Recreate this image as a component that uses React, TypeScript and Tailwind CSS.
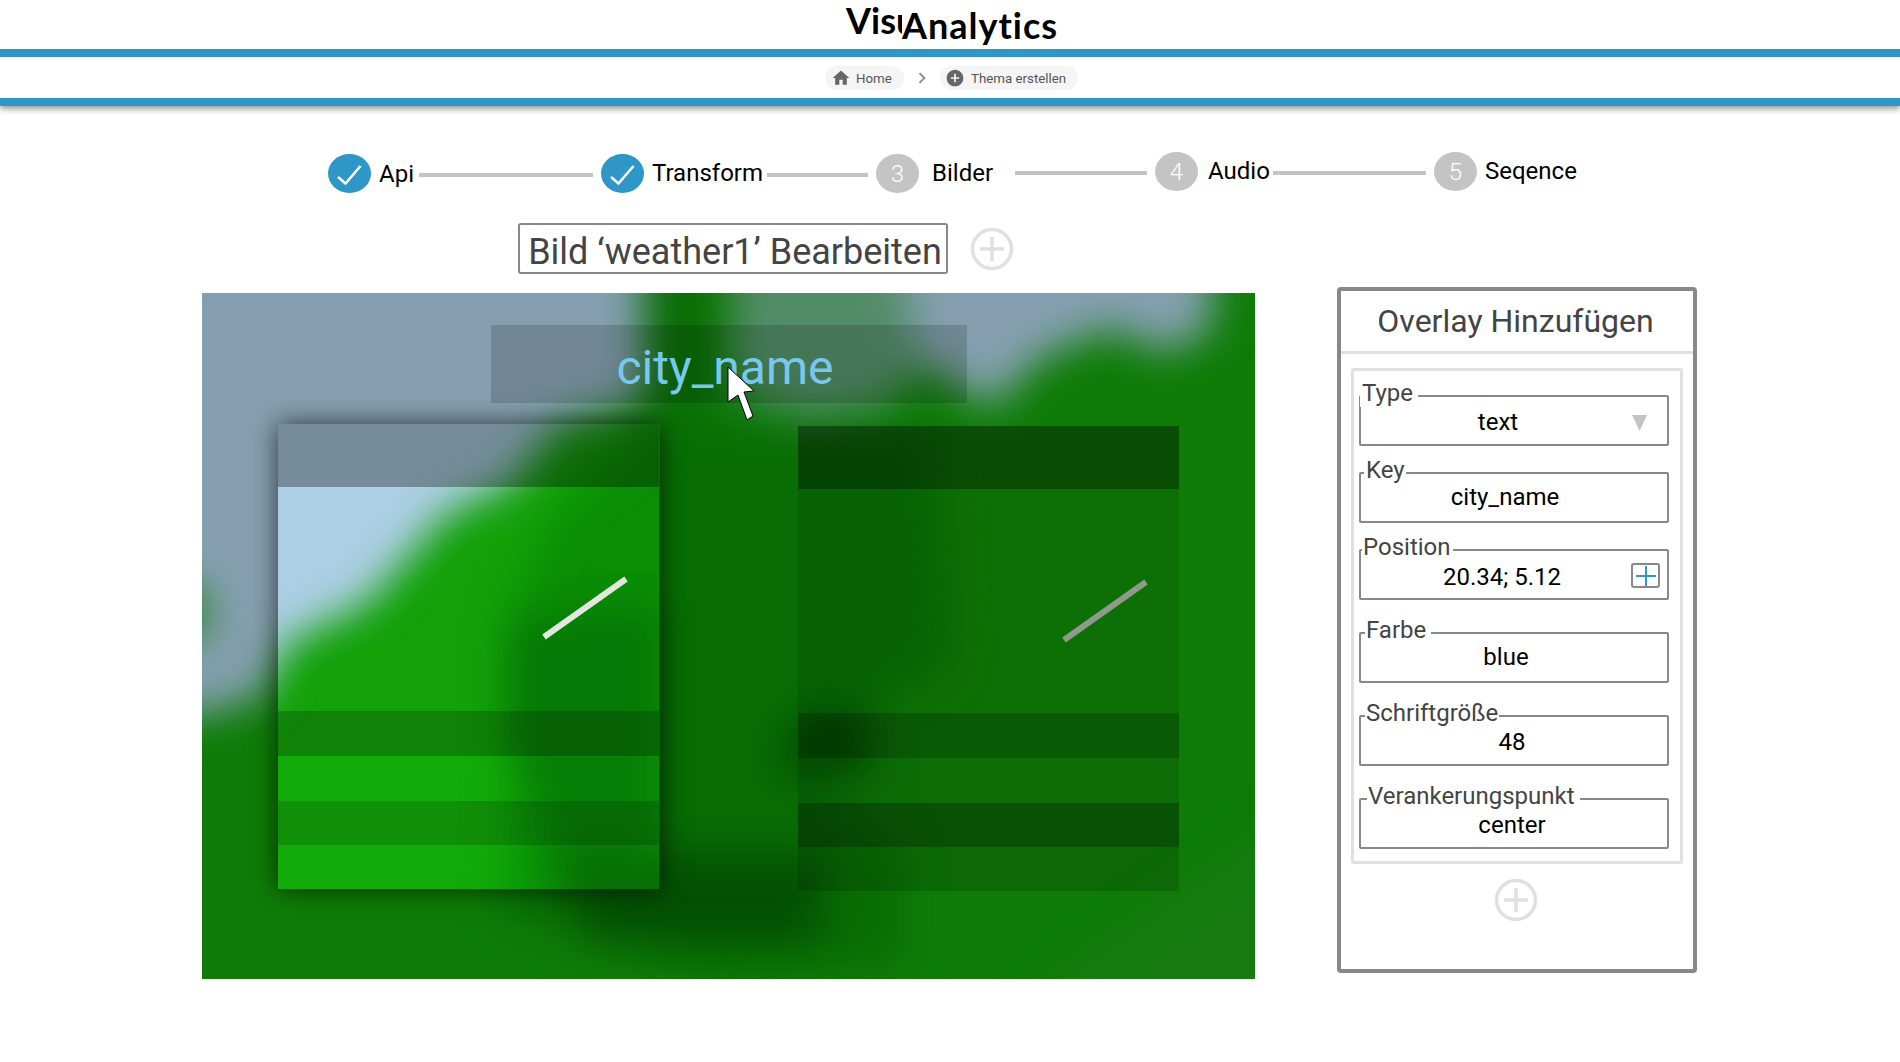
import React from "react";

const PLUS_CIRCLE = "M12 2C6.48 2 2 6.48 2 12s4.48 10 10 10 10-4.48 10-10S17.52 2 12 2zm5 11h-4v4h-2v-4H7v-2h4V7h2v4h4v2z";

function RingPlus({ className }: { className: string }) {
  return (
    <svg viewBox="0 0 44 44" className={className} fill="none" stroke="#e0e0e0">
      <circle cx="22" cy="22" r="19.5" strokeWidth="3.5" />
      <path d="M22 10v24M10 22h24" strokeWidth="3.5" />
    </svg>
  );
}

function Circle({ n, className }: { n?: number; className: string }) {
  return (
    <div className={`flex h-[39px] w-[43px] shrink-0 items-center justify-center rounded-[50%] text-[24px] font-light text-white ${className}`}>
      {n ?? (
        <svg viewBox="0 0 43 39" className="h-[39px] w-[43px]" fill="none" stroke="#fff" strokeWidth="2.6">
          <path d="M10 23l7.5 6.5L32.5 12" />
        </svg>
      )}
    </div>
  );
}

function Line({ className }: { className: string }) {
  return <div className={`h-[4px] shrink-0 bg-[#c4c4c4] ${className}`} />;
}

function Field({
  label,
  value,
  labelClass,
  valueClass,
  className,
  children,
}: {
  label: string;
  value: string;
  labelClass: string;
  valueClass: string;
  className: string;
  children?: React.ReactNode;
}) {
  return (
    <div className={`relative h-[51px] rounded-[2px] border-2 border-[#888] ${className}`}>
      <span className={`absolute top-[-18px] h-[28px] bg-white text-[24px] leading-[28px] text-[#444] ${labelClass}`}>{label}</span>
      <div className={`flex justify-center text-[24px] leading-[28px] text-black ${valueClass}`}>{value}</div>
      {children}
    </div>
  );
}

function Band({ className }: { className: string }) {
  return <div className={`w-full ${className}`} />;
}

function MapArt() {
  return (
    <svg viewBox="0 0 1053 686" className="block h-[686px] w-[1053px]">
      <defs>
        <filter id="blur-map" filterUnits="userSpaceOnUse" x="-200" y="-200" width="1453" height="1086" colorInterpolationFilters="sRGB">
          <feGaussianBlur stdDeviation="20" />
        </filter>
      </defs>
      <rect width="1053" height="686" fill="#0e7c07" />
      <g filter="url(#blur-map)">
        <path d="M860 686 L1100 520 L1100 760 L800 760Z" fill="#167c11" />
        <path
          d="M-80 -80 L445 -80 L445 105 L350 135 L310 190 L245 220 L165 310 L85 350 L60 405 L-80 440Z"
          fill="#859fb0"
        />
        <path d="M-80 285 L5 295 L5 345 L-80 350Z" fill="#0e7c07" opacity="0.8" />
        <path
          d="M695 -80 L1010 -80 L1010 35 L965 60 L908 35 L838 65 L790 115 L745 85 L705 55Z"
          fill="#859fb0"
        />
        <path d="M530 -80 L695 -80 L725 70 L680 115 L600 125 L530 95Z" fill="#6a9188" opacity="0.75" />
        <path d="M440 -40 L505 -40 L515 125 L440 125Z" fill="#086a05" opacity="0.85" />
        <path
          d="M308 320 L355 220 L448 135 L730 135 L745 370 L650 420 L600 465 L700 560 L700 670 L500 680 L300 620 L308 450Z"
          fill="#076d04"
        />
        <path d="M305 330 L458 310 L458 600 L370 590 L305 450Z" fill="#055c04" />
        <path d="M340 560 L620 560 L620 650 L390 650Z" fill="#045003" />
        <path d="M598 420 L670 420 L670 480 L570 480Z" fill="#034c02" />
      </g>
    </svg>
  );
}

function Cursor() {
  return (
    <svg viewBox="-1 -1 28 56" className="absolute left-[727px] top-[366px] h-[56px] w-[28px]">
      <path d="M0 0V35L10 28L19 53L25 49L16 25L26 24Z" fill="#fff" stroke="#000" strokeWidth="1" />
    </svg>
  );
}

export default function App() {
  return (
    <div className="relative h-[1062px] w-[1900px] overflow-hidden bg-white font-['Roboto',sans-serif]">
      <header className="relative shadow-[0_3px_6px_rgba(0,0,0,0.4)]">
        <div className="flex h-[49px] items-start overflow-hidden pl-[846px] font-['Lato',sans-serif] font-bold leading-none text-black">
          <span className="mt-[2px] w-[58px] whitespace-nowrap text-[36px] leading-[36px]">Visu</span>
          <span className="ml-[-2px] mt-[7px] bg-white text-[36px] leading-[36px] tracking-[1px]">Analytics</span>
        </div>
        <div className="h-[8px] bg-[#2f96c8]" />
        <nav className="flex h-[41px] items-center pl-[825px] text-[13.3px] text-[#555]">
          <div className="flex h-[24px] w-[79px] items-center rounded-full bg-[#f5f5f5] pl-[6px]">
            <svg viewBox="0 0 24 24" className="h-[20px] w-[20px]" fill="#666">
              <path d="M10 20v-6h4v6h5v-8h3L12 3 2 12h3v8z" />
            </svg>
            <span className="ml-[5px] pt-[2px]">Home</span>
          </div>
          <svg viewBox="0 0 24 24" className="ml-[7px] h-[22px] w-[22px]" fill="#888">
            <path d="M10 6 8.59 7.41 13.17 12l-4.58 4.59L10 18l6-6z" />
          </svg>
          <div className="ml-[7px] flex h-[24px] w-[138px] items-center rounded-full bg-[#f5f5f5] pl-[5px]">
            <svg viewBox="0 0 24 24" className="h-[20px] w-[20px]" fill="#666">
              <path d={PLUS_CIRCLE} />
            </svg>
            <span className="ml-[6px] pt-[2px]">Thema erstellen</span>
          </div>
        </nav>
        <div className="h-[8px] bg-[#2f96c8]" />
      </header>

      <section className="flex h-[41px] items-start pl-[328px] mt-[46px] text-[24px] leading-[28px] text-black">
        <Circle className="mt-[2px] bg-[#2f96c8]" />
        <span className="ml-[8px] mt-[8px] w-[40px]">Api</span>
        <Line className="mt-[21px] w-[174px]" />
        <Circle className="ml-[8px] mt-[2px] bg-[#2f96c8]" />
        <span className="ml-[8px] mt-[7px] w-[115px]">Transform</span>
        <Line className="mt-[21px] w-[101px]" />
        <Circle n={3} className="ml-[8px] mt-[2px] bg-[#c4c4c4]" />
        <span className="ml-[13px] mt-[7px] w-[83px]">Bilder</span>
        <Line className="mt-[19px] w-[132px]" />
        <Circle n={4} className="ml-[8px] bg-[#c4c4c4]" />
        <span className="ml-[10px] mt-[5px] w-[65px]">Audio</span>
        <Line className="mt-[19px] w-[153px]" />
        <Circle n={5} className="ml-[8px] bg-[#c4c4c4]" />
        <span className="ml-[8px] mt-[5px]">Seqence</span>
      </section>

      <main className="mt-[30px] flex items-start pl-[202px]">
        <div className="w-[1053px] shrink-0">
          <div className="flex h-[51px] items-center pl-[316px]">
            <div className="flex h-[51px] w-[430px] items-center justify-center rounded-[3px] border-2 border-[#888] pl-[4px] pt-[6px] text-[36px] leading-[40px] text-[#444]">
              Bild ‘weather1’ Bearbeiten
            </div>
            <RingPlus className="ml-[22px] h-[44px] w-[44px]" />
          </div>
          <div className="mt-[19px] h-[686px] overflow-hidden">
            <MapArt />
          </div>
        </div>

        <aside className="ml-[82px] mt-[64px] h-[686px] w-[360px] shrink-0 rounded-[4px] border-4 border-[#888] bg-white">
          <h2 className="flex h-[63px] items-center justify-center border-b-[3px] border-[#e0e0e0] pr-[3px] text-[32px] font-normal text-[#444]">
            Overlay Hinzufügen
          </h2>
          <div className="mx-[10px] mt-[14px] h-[496px] rounded-[3px] border-[3px] border-[#e0e0e0] pl-[5px] pr-[11px] pt-[24px]">
            <Field label="Type" value="text" className="" labelClass="left-[-1px] pl-[2px] pr-[5px]" valueClass="pr-[32px] pt-[11px]">
              <svg viewBox="0 0 15 16" className="absolute left-[271px] top-[18px] h-[16px] w-[15px]" fill="#c4c4c4">
                <path d="M0 0H15L7.5 16Z" />
              </svg>
            </Field>
            <Field label="Key" value="city_name" className="mt-[26px]" labelClass="left-[3px] pl-[2px] pr-[1px]" valueClass="pr-[18px] pt-[9px]" />
            <Field label="Position" value="20.34; 5.12" className="mt-[26px]" labelClass="left-[1px] pl-[1px] pr-[2px]" valueClass="pr-[24px] pt-[12px]">
              <div className="absolute left-[270px] top-[12px] flex h-[25px] w-[29px] items-center justify-center rounded-[3px] border-2 border-[#888]">
                <svg viewBox="0 0 20 20" className="h-[20px] w-[20px]" stroke="#2f96c8" strokeWidth="2" fill="none">
                  <path d="M10 0v20M0 10h20" />
                </svg>
              </div>
            </Field>
            <Field label="Farbe" value="blue" className="mt-[32px]" labelClass="left-[4px] pl-[1px] pr-[5px]" valueClass="pr-[16px] pt-[9px]" />
            <Field label="Schriftgröße" value="48" className="mt-[32px]" labelClass="left-[4px] pl-[1px] pr-[1px]" valueClass="pr-[4px] pt-[11px]" />
            <Field label="Verankerungspunkt" value="center" className="mt-[32px]" labelClass="left-[6px] pl-[1px] pr-[5px]" valueClass="pr-[4px] pt-[11px]" />
          </div>
          <div className="mt-[14px] flex justify-center pr-[2px]">
            <RingPlus className="h-[44px] w-[44px]" />
          </div>
        </aside>
      </main>

      <div className="absolute left-[491px] top-[325px] flex h-[78px] w-[476px] items-center justify-center bg-black/15 pr-[8px] pt-[7px] text-[48px] leading-[56px] text-[#78c8ee]">
        city_name
      </div>

      <div className="absolute left-[278px] top-[424px] flex h-[465px] w-[382px] flex-col shadow-[0_0_24px_rgba(0,0,0,0.65)]">
        <Band className="h-[63px] backdrop-brightness-[0.88]" />
        <Band className="h-[224px] backdrop-brightness-[1.3]" />
        <Band className="h-[45px] backdrop-brightness-[1.05]" />
        <Band className="h-[45px] backdrop-brightness-[1.38]" />
        <Band className="h-[44px] backdrop-brightness-[1.15]" />
        <Band className="h-[44px] backdrop-brightness-[1.38]" />
      </div>
      <svg viewBox="0 0 90 66" className="absolute left-[540px] top-[575px] h-[66px] w-[90px]">
        <path d="M4 62L86 4" stroke="#e3e7df" strokeWidth="6" />
      </svg>

      <div className="absolute left-[798px] top-[426px] flex h-[465px] w-[382px] flex-col">
        <Band className="h-[63px] backdrop-brightness-[0.62]" />
        <Band className="h-[224px] backdrop-brightness-[0.9]" />
        <Band className="h-[45px] backdrop-brightness-[0.72]" />
        <Band className="h-[45px] backdrop-brightness-[0.88]" />
        <Band className="h-[44px] backdrop-brightness-[0.65]" />
        <Band className="h-[44px] backdrop-brightness-[0.85]" />
      </div>
      <svg viewBox="0 0 90 66" className="absolute left-[1060px] top-[578px] h-[66px] w-[90px]">
        <path d="M4 62L86 4" stroke="#8f9a8d" strokeWidth="6" />
      </svg>

      <Cursor />
    </div>
  );
}
